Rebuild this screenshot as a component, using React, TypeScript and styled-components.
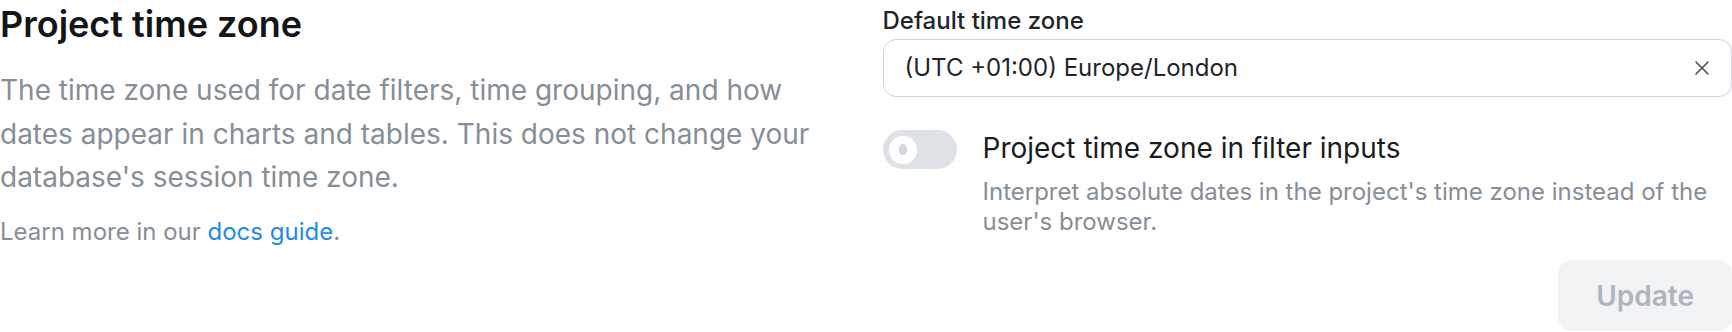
import React, { useState } from 'react';
import styled, { createGlobalStyle } from 'styled-components';

const GlobalStyle = createGlobalStyle`
  html, body {
    margin: 0;
    padding: 0;
    background: #ffffff;
  }

  body {
    font-family: Inter, "Noto Sans", "Liberation Sans", sans-serif;
    color: #1a1b1e;
    -webkit-font-smoothing: antialiased;
  }
`;

const Page = styled.div`
  display: grid;
  grid-template-columns: 1fr 1fr;
  column-gap: 33px;
  width: 1732px;
  height: 332px;
  box-sizing: border-box;
  overflow: hidden;
`;

const InfoColumn = styled.section`
  display: flex;
  flex-direction: column;
  padding-top: 2px;
`;

const Title = styled.h2`
  margin: 0;
  font-size: 36px;
  line-height: 44px;
  font-weight: 600;
  color: #141517;
`;

const Description = styled.p`
  margin: 23px 0 0;
  max-width: 825px;
  font-size: 28px;
  line-height: 43.5px;
  font-weight: 400;
  color: #868e96;
`;

const Note = styled.p`
  margin: 15px 0 0;
  font-size: 24px;
  line-height: 34px;
  color: #868e96;
`;

const DocsLink = styled.a`
  color: #228be6;
  text-decoration: none;
  cursor: pointer;

  &:hover {
    text-decoration: underline;
  }
`;

const SettingsColumn = styled.section`
  display: flex;
  flex-direction: column;
  padding-top: 6px;
`;

const FieldLabel = styled.label`
  display: block;
  font-size: 24px;
  line-height: 30px;
  font-weight: 500;
  color: #212529;
  margin-bottom: 3px;
`;

const SelectBox = styled.div`
  display: flex;
  align-items: center;
  height: 58px;
  box-sizing: border-box;
  padding: 0 20px 0 21px;
  border: 1px solid #ced4da;
  border-radius: 13px;
  background: #ffffff;
`;

const SelectValue = styled.span`
  flex: 1;
  font-size: 24px;
  line-height: 30px;
  color: #212529;
`;

const ClearButton = styled.button`
  display: flex;
  align-items: center;
  justify-content: center;
  width: 18px;
  height: 18px;
  padding: 0;
  border: none;
  background: none;
  color: #495057;
  cursor: pointer;
`;

const ToggleRow = styled.div`
  display: flex;
  align-items: flex-start;
  gap: 26px;
  margin-top: 33px;
`;

const SwitchTrack = styled.button<{ checked: boolean }>`
  flex: none;
  position: relative;
  width: 74px;
  height: 39px;
  padding: 0;
  border: none;
  border-radius: 999px;
  background: ${props => (props.checked ? '#228be6' : '#dee2e6')};
  cursor: pointer;
  transition: background 0.15s;
`;

const SwitchThumb = styled.span<{ checked: boolean }>`
  position: absolute;
  top: 5.5px;
  left: ${props => (props.checked ? '40px' : '6px')};
  width: 28px;
  height: 28px;
  border-radius: 50%;
  background: #ffffff;
  display: flex;
  align-items: center;
  justify-content: center;
  transition: left 0.15s;
`;

const ToggleText = styled.div`
  display: flex;
  flex-direction: column;
  gap: 11px;
`;

const ToggleTitle = styled.span`
  font-size: 28px;
  line-height: 36px;
  color: #1a1b1e;
`;

const ToggleHint = styled.span`
  font-size: 24px;
  line-height: 30px;
  color: #868e96;
`;

const Actions = styled.div`
  display: flex;
  justify-content: flex-end;
  margin-top: 23px;
`;

const UpdateButton = styled.button`
  height: 71px;
  padding: 0 38px;
  border: none;
  border-radius: 14px;
  background: #f1f3f5;
  color: #adb5bd;
  font-family: inherit;
  font-size: 28px;
  font-weight: 600;
  cursor: not-allowed;
`;

const CloseIcon = () => (
  <svg width="16" height="16" viewBox="0 0 16 16" fill="none">
    <path d="M2 2L14 14M14 2L2 14" stroke="currentColor" strokeWidth="1.6" strokeLinecap="round" />
  </svg>
);

const App: React.FC = () => {
  const [timeZone, setTimeZone] = useState('(UTC +01:00) Europe/London');
  const [useProjectZone, setUseProjectZone] = useState(false);

  return (
    <>
      <GlobalStyle />
      <Page>
        <InfoColumn>
          <Title>Project time zone</Title>
          <Description>
            The time zone used for date filters, time grouping, and how dates appear in charts
            and tables. This does not change your database's session time zone.
          </Description>
          <Note>
            Learn more in our <DocsLink>docs guide</DocsLink>.
          </Note>
        </InfoColumn>

        <SettingsColumn>
          <FieldLabel>Default time zone</FieldLabel>
          <SelectBox>
            <SelectValue>{timeZone}</SelectValue>
            <ClearButton aria-label="Clear" onClick={() => setTimeZone('')}>
              <CloseIcon />
            </ClearButton>
          </SelectBox>

          <ToggleRow>
            <SwitchTrack
              checked={useProjectZone}
              onClick={() => setUseProjectZone(v => !v)}
              aria-pressed={useProjectZone}
            >
              <SwitchThumb checked={useProjectZone}>
                <svg width="10" height="13" viewBox="0 0 10 13">
                  <ellipse cx="5" cy="6.5" rx="4.3" ry="5.8" fill="#d3d8de" />
                </svg>
              </SwitchThumb>
            </SwitchTrack>
            <ToggleText>
              <ToggleTitle>Project time zone in filter inputs</ToggleTitle>
              <ToggleHint>
                Interpret absolute dates in the project's time zone instead of the user's browser.
              </ToggleHint>
            </ToggleText>
          </ToggleRow>

          <Actions>
            <UpdateButton disabled>Update</UpdateButton>
          </Actions>
        </SettingsColumn>
      </Page>
    </>
  );
};

export default App;
